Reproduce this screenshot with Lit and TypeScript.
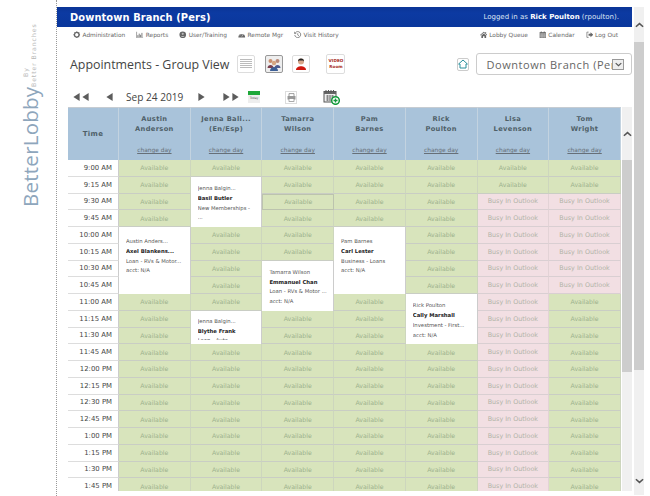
import { LitElement, html, css, svg } from "lit";
import { customElement } from "lit/decorators.js";

const times = ["9:00 AM","9:15 AM","9:30 AM","9:45 AM","10:00 AM","10:15 AM","10:30 AM","10:45 AM","11:00 AM","11:15 AM","11:30 AM","11:45 AM","12:00 PM","12:15 PM","12:30 PM","12:45 PM","1:00 PM","1:15 PM","1:30 PM","1:45 PM"];
const people = [["Austin","Anderson"],["Jenna Bali...","(En/Esp)"],["Tamarra","Wilson"],["Pam","Barnes"],["Rick","Poulton"],["Lisa","Levenson"],["Tom","Wright"]];
type Appt = { col: number; row: number; span: number; pad: string; lines: string[] };
const appts: Appt[] = [
  { col: 1, row: 1, span: 3, pad: "p6", lines: ["Jenna Balgin...", "Basil Butler", "New Memberships -", "..."] },
  { col: 0, row: 4, span: 4, pad: "p9", lines: ["Austin Anders...", "Axel Blankens...", "Loan - RVs & Motor...", "acct: N/A"] },
  { col: 3, row: 4, span: 4, pad: "p9", lines: ["Pam Barnes", "Carl Lester", "Business - Loans", "acct: N/A"] },
  { col: 2, row: 6, span: 3, pad: "p6", lines: ["Tamarra Wilson", "Emmanuel Chan", "Loan - RVs & Motor ...", "acct: N/A"] },
  { col: 4, row: 8, span: 3, pad: "p6", lines: ["Rick Poulton", "Cally Marshall", "Investment - First...", "acct: N/A"] },
  { col: 1, row: 9, span: 2, pad: "p5", lines: ["Jenna Balgin...", "Blythe Frank", "Loan - Auto"] },
];
const covered = (c: number, r: number) => appts.some(a => a.col === c && r >= a.row && r < a.row + a.span);
const busy = (c: number, r: number) => (c === 5 && r >= 2) || (c === 6 && r >= 2 && r <= 7);

const ic = (inner: unknown, box = "0 0 10 10") => html`<svg class="nicon" viewBox=${box}>${inner}</svg>`;
const gear = ic(svg`<circle cx="5" cy="5" r="3.1" fill="none" stroke="#666" stroke-width="1.8"/><path d="M5 .6V2M5 8v1.4M.6 5H2M8 5h1.4M1.9 1.9l1 1M7.1 7.1l1 1M1.9 8.1l1-1M7.1 2.9l1-1" stroke="#666" stroke-width="1.2"/>`);
const chart = ic(svg`<path d="M.8 1v8h8.6" fill="none" stroke="#777" stroke-width=".9"/><path d="M2.5 8V5.5M4.3 8V3.5M6.1 8V5M7.9 8V2.5" stroke="#666" stroke-width="1.1"/>`);
const person = ic(svg`<circle cx="5" cy="5" r="4.4" fill="#666"/><circle cx="5" cy="3.8" r="1.4" fill="#bbb"/><path d="M2.6 8c.3-2 4.5-2 4.8 0z" fill="#bbb"/>`);
const gauge = ic(svg`<path d="M.5 8.5a4.5 4.5 0 0 1 9 0z" fill="#666"/><path d="M5 7.5 7 4" stroke="#ddd" stroke-width=".9"/><circle cx="2.6" cy="6.4" r=".6" fill="#ddd"/><circle cx="4" cy="4.6" r=".6" fill="#ddd"/>`);
const hist = ic(svg`<path d="M1.6 2.6A4 4 0 1 1 1 5.4" fill="none" stroke="#666" stroke-width="1"/><path d="M.6 1v2.4H3" fill="none" stroke="#666" stroke-width=".9"/><path d="M5 3v2.4l1.6 1" fill="none" stroke="#666" stroke-width=".9"/>`);
const house = ic(svg`<path d="M0 5.3 5 1l5 4.3-.7.6L5 2.4.7 5.9z" fill="#666"/><path d="M1.8 6 5 3.4 8.2 6v3.4H6V7H4v2.4H1.8z" fill="#666"/><path d="M7 1.4h1.2v2L7 2.4z" fill="#666"/>`);
const cal = ic(svg`<rect x=".8" y="1.4" width="8.4" height="8" fill="#777"/><path d="M1 4h8M1 5.8h8M1 7.6h8M3 3v6.4M5 3v6.4M7 3v6.4" stroke="#ddd" stroke-width=".5"/><path d="M3 .5v2M7 .5v2" stroke="#555" stroke-width=".9"/>`);
const logout = ic(svg`<path d="M3.5 1.5H1.2v7h2.3" fill="none" stroke="#666" stroke-width=".9"/><path d="M3.4 3.8h2.6V1.8L9.6 5 6 8.2V6.2H3.4z" fill="#666"/>`);

const tri = (right: boolean) => html`<svg class="tri" viewBox="0 0 7 9"><path d=${right ? "M0 0l7 4.5L0 9z" : "M7 0L0 4.5 7 9z"} fill="#5c5c5c"/></svg>`;
const chevUp = html`<svg class="chev" viewBox="0 0 10 6"><path d="M1 5l4-3.6L9 5" fill="none" stroke="#555" stroke-width="1.7"/></svg>`;
const chevDown = html`<svg class="chev" viewBox="0 0 10 6"><path d="M1 1l4 3.6L9 1" fill="none" stroke="#555" stroke-width="1.7"/></svg>`;

@customElement("app-root")
export class AppRoot extends LitElement {
  static styles = css`
    :host { display: block; width: 650px; height: 496px; overflow: hidden; background: #fff; font-family: "DejaVu Sans", Verdana, sans-serif; }
    .page { display: flex; height: 496px; }
    .rail { width: 56px; flex: none; border-right: 1px dotted #999; box-sizing: content-box; }
    .brand { writing-mode: vertical-rl; transform: rotate(180deg); display: flex; align-items: flex-start; height: 187px; margin: 20px 0 0 20px; width: 20px; }
    .brand .big { font: 20.5px "Open Sans", sans-serif; color: #8ea6bc; letter-spacing: .25px; line-height: 20px; }
    .brand .small { display: flex; flex-direction: column; color: #b9b9b9; font-size: 6.2px; line-height: 7.5px; letter-spacing: .9px; margin-block-start: 2px; }
    .brand .small .by { padding-inline-start: 10px; }
    .main { width: 575px; flex: none; padding-top: 7px; box-sizing: border-box; }
    .bar { height: 20px; background: linear-gradient(#0b3596 0, #0c3aa2 30%, #0a379c 100%); color: #fff; display: flex; align-items: center; justify-content: space-between; padding: 0 13px; font-size: 7px; }
    .bar b.t { font-size: 9.9px; font-weight: bold; letter-spacing: .1px; }
    .bar .who { color: #dce5f5; font-size: 7px; }
    .bar .who b { color: #fff; }
    .nav { display: flex; justify-content: space-between; height: 15px; align-items: center; padding: 0 14px 0 16px; font-size: 5.85px; color: #666; }
    .nav > div { display: flex; gap: 11px; }
    .nav span { display: flex; align-items: center; gap: 2px; }
    .nicon { width: 7.5px; height: 7.5px; flex: none; }
    .titlerow { display: flex; align-items: center; height: 24px; margin-top: 10px; padding-left: 13px; }
    h1 { margin: 0; font: 400 12.4px "Open Sans", sans-serif; color: #444; width: 168px; white-space: nowrap; }
    .tb { width: 18px; height: 18px; box-sizing: border-box; border: 1px solid #ddd; border-radius: 2px; display: flex; align-items: center; justify-content: center; background: #fff; flex: none; }
    .tb svg { width: 14px; height: 14px; }
    .tb.on { border-color: #999; background: #eee; margin-left: 10px; }
    .tb.red { margin-left: 9px; }
    .tb.video { margin-left: 16px; width: 19px; height: 20px; flex-direction: column; color: #a62a1c; font-size: 4.2px; font-weight: bold; line-height: 6px; }
    .tb.home { margin-left: 112px; width: 12px; height: 13px; border-color: #ccc; }
    .tb.home svg { width: 10px; height: 10px; }
    .sel { margin-left: 7px; width: 156px; height: 22px; box-sizing: border-box; border: 1px solid #ccc; border-radius: 3px; display: flex; align-items: center; padding-left: 9px; font: 400 11px "Open Sans", sans-serif; letter-spacing: .55px; color: #666; position: relative; white-space: nowrap; }
    .seltext { display: block; width: 126px; overflow: hidden; }
    .selbtn { position: absolute; right: 7px; top: 5px; width: 12px; height: 11px; border: 1px solid #999; box-sizing: border-box; background: #eee; display: flex; align-items: center; justify-content: center; }
    .selbtn .chev { width: 7px; height: 5px; }
    .ctrl { display: flex; align-items: center; height: 16px; margin-top: 13px; padding-left: 16px; }
    .tri { width: 7px; height: 8px; flex: none; }
    .tris { display: flex; gap: 2px; }
    .gap17 { margin-left: 17px; }
    .gap18 { margin-left: 18px; }
    .date { font: 400 10.1px "Open Sans", sans-serif; color: #444; margin: 0 14px 0 13px; width: 58px; white-space: nowrap; }
    .today { width: 12px; height: 12px; margin-left: 9px; background: #eee; border-top: 4px solid #1fa83a; box-sizing: border-box; font-size: 3px; color: #555; text-align: center; line-height: 7px; }
    .print { width: 12px; height: 13px; margin-left: 25px; border: 1px solid #ddd; box-sizing: border-box; display: flex; align-items: center; justify-content: center; }
    .print svg { width: 9px; height: 9px; }
    .calplus { width: 17px; height: 16px; margin-left: 26px; }
    .wrap { display: flex; margin: 2px 0 0 11px; height: 384px; }
    .table { width: 553px; overflow: hidden; flex: none; }
    .head { display: grid; grid-template-columns: 51px repeat(7, 71.714px); height: 53px; background: #a9c3da; color: #4f5f68; }
    .hc { border-right: 1px solid #c3d3e0; border-top: 1px solid #c6ccd2; text-align: center; font-size: 6.7px; font-weight: bold; line-height: 10px; padding-top: 6px; box-sizing: border-box; letter-spacing: .35px; display: flex; flex-direction: column; }
    .hc.time { justify-content: center; padding: 0; font-size: 7px; }
    .hc u { font-weight: normal; font-size: 5.9px; color: #666f78; margin-top: 11px; letter-spacing: 0; }
    .body { display: grid; grid-template-columns: 51px repeat(7, 71.714px); grid-auto-rows: 16.75px; }
    .c { box-sizing: border-box; border-bottom: 1px solid #c9cdc4; border-right: 1px solid #cdd6bd; display: flex; align-items: center; justify-content: center; font-size: 6.2px; overflow: hidden; }
    .c.free { background: #d8e4bc; color: #9cb18c; }
    .c.busy { background: #f2dfe3; color: #b1b3a7; border-right-color: #e3d3d6; border-bottom-color: #d9cfd2; font-size: 6.4px; }
    .c.focus { border: 1px solid #bcc3ae; }
    .c.tm { background: #fff; color: #444; justify-content: flex-end; padding-right: 6px; font-size: 6.9px; border-right: 1px solid #ccc; border-bottom-color: #ddd; }
    .appt { background: #fff; box-sizing: border-box; padding-left: 7px; padding-bottom: 4px; font-size: 5.3px; line-height: 9.8px; color: #555; border-right: 1px solid #ccc; white-space: nowrap; display: flex; flex-direction: column; min-height: 0; overflow: hidden; }
    .lines { overflow: hidden; min-height: 0; flex: 1; }
    .appt b { color: #222; display: block; }
    .p9 { padding-top: 10px; } .p6 { padding-top: 7.3px; } .p5 { padding-top: 6px; }
    .sb { width: 10px; margin-left: 1px; background: #f0f0f0; flex: none; display: flex; flex-direction: column; }
    .sb .btn { display: flex; align-items: center; justify-content: center; flex: none; }
    .chev { width: 9px; height: 6px; }
    .sb .thumb { background: #cdcdcd; flex: none; }
    .sb1 .btn { height: 53px; } .sb1 .thumb { height: 212px; }
    .outer { margin: 7px 0 0 2px; height: 488px; width: 10px; }
    .outer .btn { height: 35px; } .outer .thumb { height: 328px; }
    .outer .grow { flex: 1; }
    .outer .btn.dn { height: 28px; }
  `;

  render() {
    return html`<div class="page">
      <div class="rail"><div class="brand">
        <div class="big">BetterLobby</div>
        <div class="small"><span class="by">By</span><span>Better Branches</span></div>
      </div></div>
      <div class="main">
        <div class="bar"><b class="t">Downtown Branch (Pers)</b><span class="who">Logged in as <b>Rick Poulton</b> (rpoulton).</span></div>
        <div class="nav">
          <div>
            <span>${gear}Administration</span><span>${chart}Reports</span><span>${person}User/Training</span><span>${gauge}Remote Mgr</span><span>${hist}Visit History</span>
          </div>
          <div><span>${house}Lobby Queue</span><span>${cal}Calendar</span><span>${logout}Log Out</span></div>
        </div>
        <div class="titlerow">
          <h1>Appointments - Group View</h1>
          <div class="tb"><svg viewBox="0 0 14 14"><path d="M1 2.5h12M1 4.5h12M1 6.5h12M1 8.5h12M1 10.5h12" stroke="#bbb" stroke-width="1.2"/></svg></div>
          <div class="tb on"><svg viewBox="0 0 14 14"><circle cx="3.5" cy="4" r="2" fill="#c98f6f"/><circle cx="10.5" cy="4" r="2" fill="#b98a7a"/><path d="M.5 11c0-4 6-4 6 0z" fill="#7b3f4e"/><path d="M7.5 11c0-4 6-4 6 0z" fill="#4d5b8f"/><circle cx="7" cy="6" r="2.2" fill="#d6a581"/><path d="M3 14c0-5.500 8-5.500 8 0z" fill="#3d5f96"/></svg></div>
          <div class="tb red"><svg viewBox="0 0 14 14"><circle cx="7" cy="4.500" r="3" fill="#d9a78a"/><path d="M4 4.500a3 3 0 0 1 6 0l-1-1H5z" fill="#222"/><path d="M2 13c0-5 10-5 10 0z" fill="#d0180f"/></svg></div>
          <div class="tb video"><span>VIDEO</span><span>Room</span></div>
          <div class="tb home"><svg viewBox="0 0 10 10"><path d="M.6 5 5 1l4.400 4H8v4H2V5z" fill="none" stroke="#2a8f9c" stroke-width="1"/></svg></div>
          <div class="sel"><span class="seltext">Downtown Branch (Pers)</span><div class="selbtn">${chevDown}</div></div>
        </div>
        <div class="ctrl">
          <span class="tris">${tri(false)}${tri(false)}</span>
          <span class="tris gap17">${tri(false)}</span>
          <span class="date">Sep 24 2019</span>
          <span class="tris">${tri(true)}</span>
          <span class="tris gap18">${tri(true)}${tri(true)}</span>
          <div class="today">Today</div>
          <div class="print"><svg viewBox="0 0 9 9"><path d="M2 3V.6h5V3" fill="none" stroke="#888" stroke-width=".8"/><rect x=".5" y="3" width="8" height="3.500" fill="#999"/><rect x="2" y="5.500" width="5" height="3" fill="#fff" stroke="#888" stroke-width=".7"/></svg></div>
          <svg class="calplus" viewBox="0 0 17 16"><rect x="1" y="2.500" width="12" height="10.500" fill="#eee" stroke="#555" stroke-width="1"/><rect x="1" y="2.500" width="12" height="2.500" fill="#666"/><path d="M3 1v2.500M5.500 1v2.500M8 1v2.500M10.500 1v2.500" stroke="#555"/><path d="M3 7h8M3 9h8M3 11h8M4.500 6v6M7 6v6M9.500 6v6" stroke="#777" stroke-width=".8"/><circle cx="12.500" cy="11.500" r="3.800" fill="#fff" stroke="#129a3a" stroke-width="1.500"/><path d="M12.500 9.500v4M10.500 11.500h4" stroke="#129a3a" stroke-width="1.300"/></svg>
        </div>
        <div class="wrap">
          <div class="table">
            <div class="head">
              <div class="hc time">Time</div>
              ${people.map(p => html`<div class="hc"><span>${p[0]}</span><span>${p[1]}</span><u>change day</u></div>`)}
            </div>
            <div class="body">
              ${times.map((t, r) => html`
                <div class="c tm" style="grid-row:${r + 1};grid-column:1">${t}</div>
                ${people.map((_, c) => covered(c, r) ? "" : html`<div class="c ${busy(c, r) ? "busy" : "free"} ${c === 2 && r === 2 ? "focus" : ""}" style="grid-row:${r + 1};grid-column:${c + 2}">${busy(c, r) ? "Busy In Outlook" : "Available"}</div>`)}
              `)}
              ${appts.map(a => html`<div class="appt ${a.pad}" style="grid-row:${a.row + 1} / span ${a.span};grid-column:${a.col + 2}">
                <div class="lines">${a.lines.map((l, i) => i === 1 ? html`<b>${l}</b>` : html`<div>${l}</div>`)}</div>
              </div>`)}
            </div>
          </div>
          <div class="sb sb1"><div class="btn">${chevUp}</div><div class="thumb"></div></div>
        </div>
      </div>
      <div class="sb outer"><div class="btn">${chevUp}</div><div class="thumb"></div><div class="grow"></div><div class="btn dn">${chevDown}</div></div>
    </div>`;
  }
}
